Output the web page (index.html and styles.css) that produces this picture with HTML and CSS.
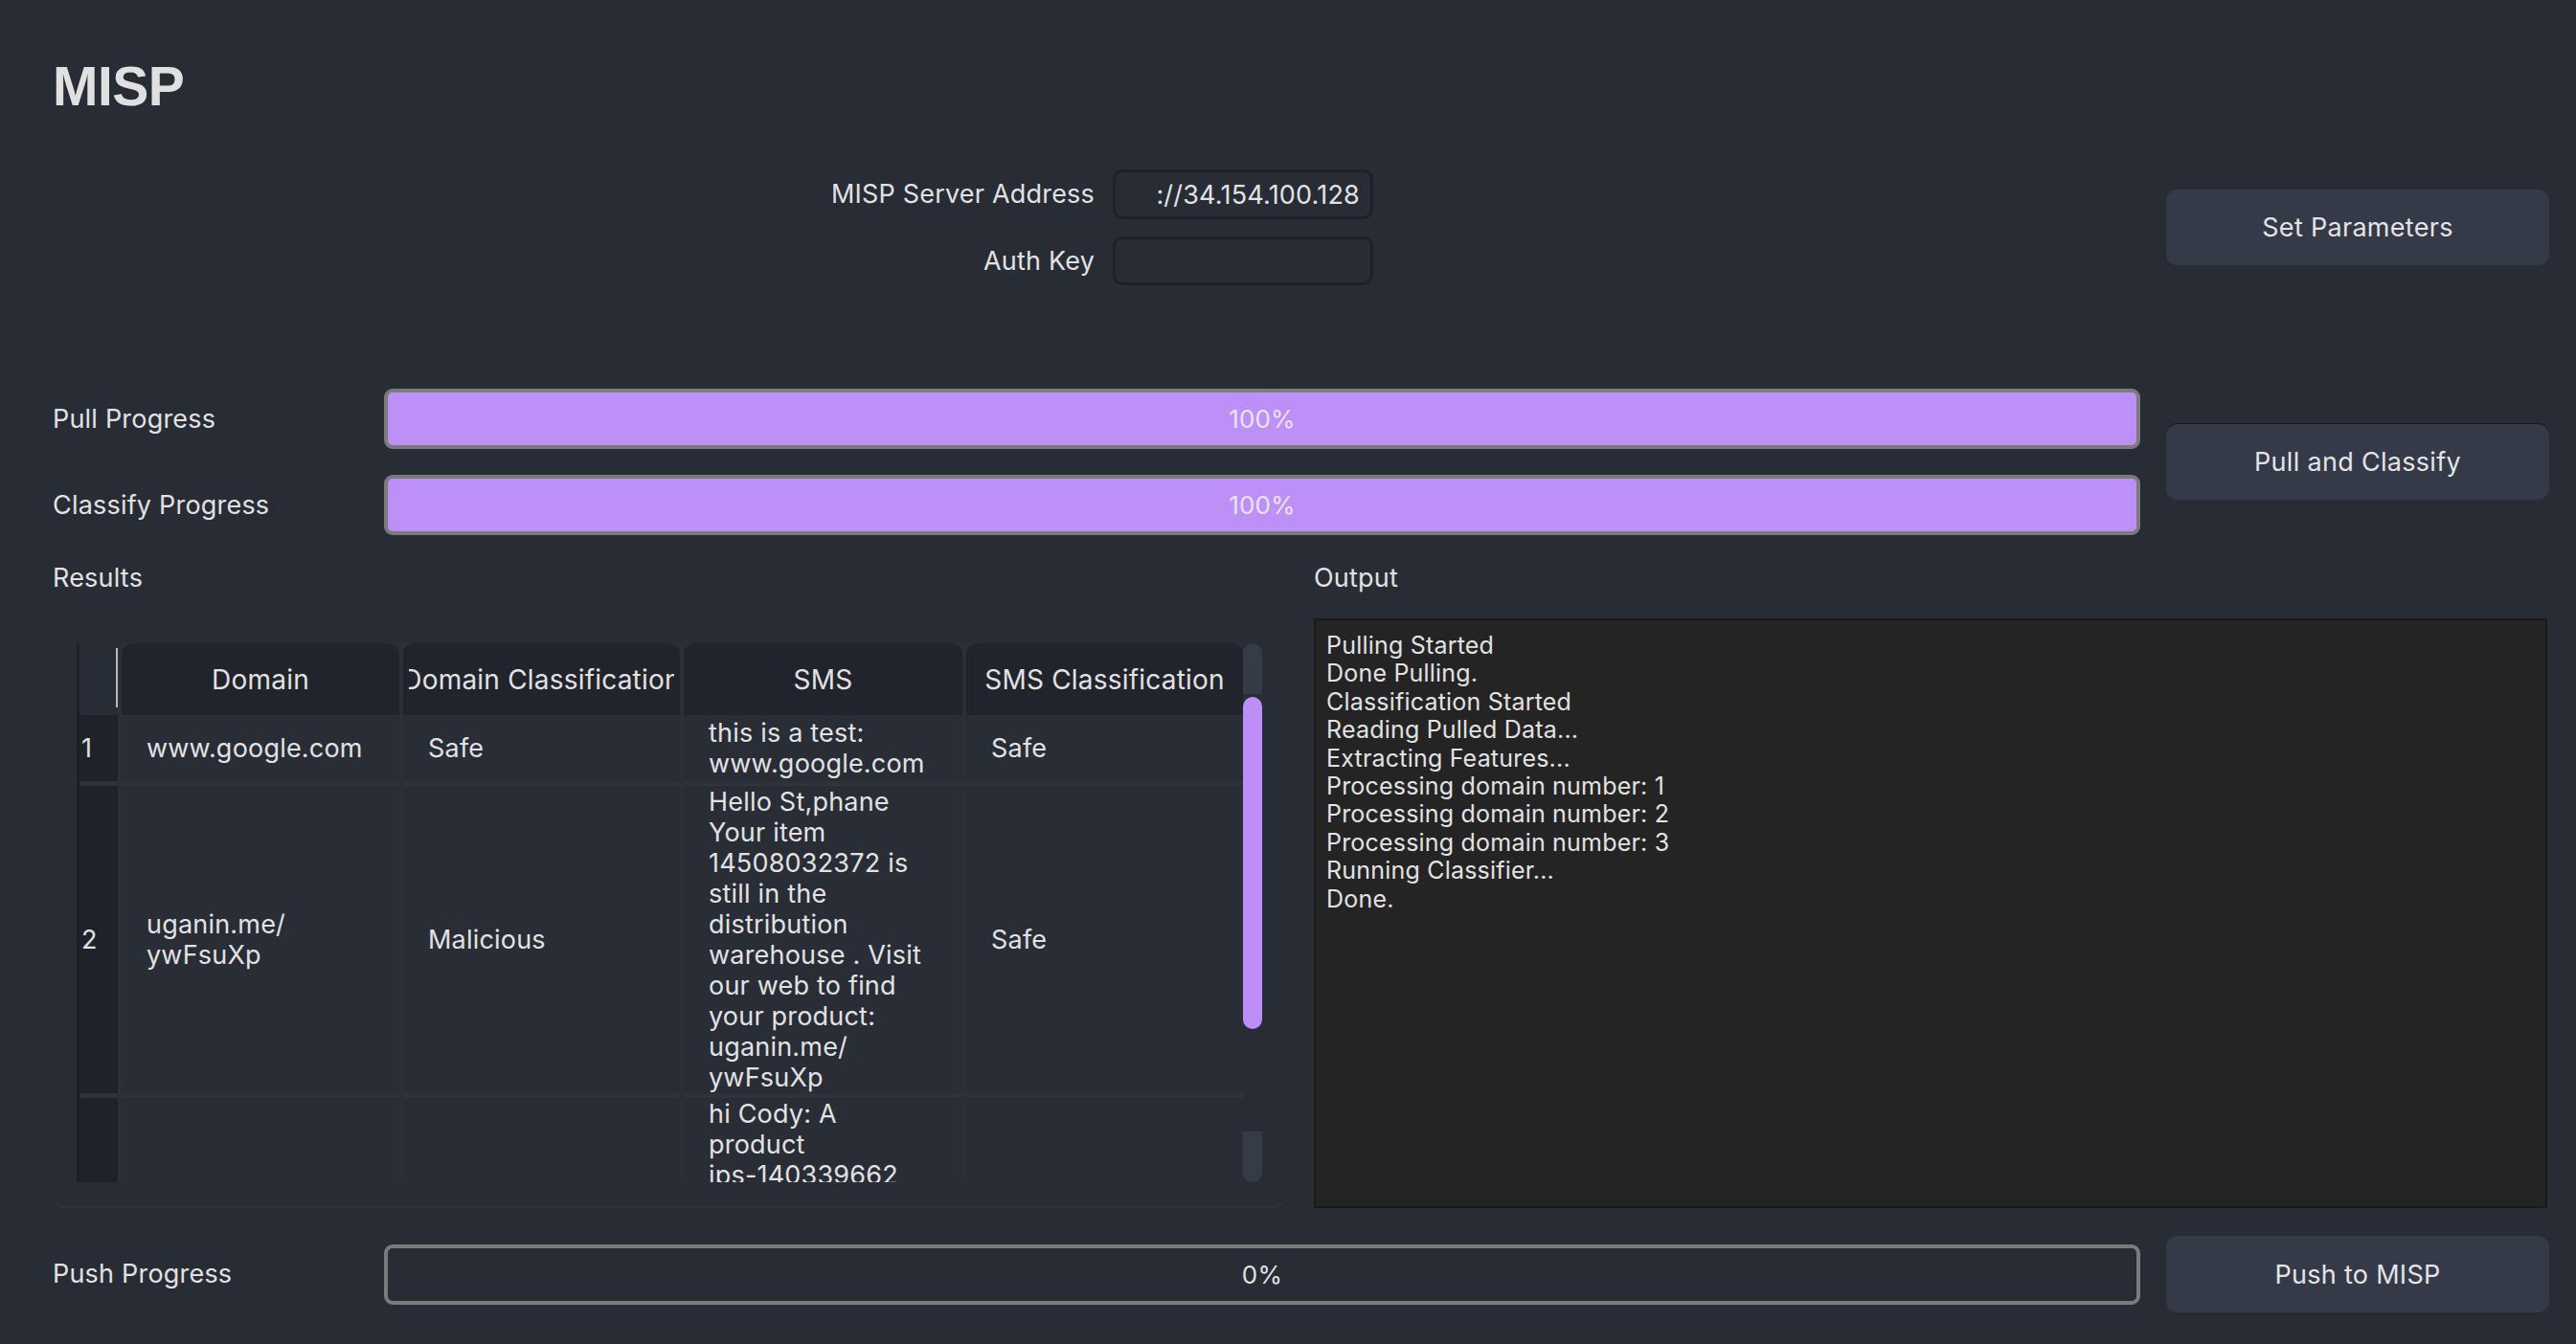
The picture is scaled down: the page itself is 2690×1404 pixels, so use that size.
FILE: index.html
```html
<!DOCTYPE html>
<html lang="en">
<head>
<meta charset="utf-8">
<title>MISP</title>
<link rel="stylesheet" href="styles.css">
</head>
<body>
<div class="app">
  <h1 class="title">MISP</h1>

  <div class="params">
    <div class="form">
      <label class="flabel">MISP Server Address</label>
      <div class="input"><span>://34.154.100.128</span></div>
      <label class="flabel">Auth Key</label>
      <div class="input"></div>
    </div>
    <button class="btn">Set Parameters</button>
  </div>

  <div class="progress">
    <span class="plabel r1">Pull Progress</span>
    <div class="bar full r1">100%</div>
    <span class="plabel r2">Classify Progress</span>
    <div class="bar full r2">100%</div>
    <button class="btn pull">Pull and Classify</button>
  </div>

  <div class="panels">
    <section class="panel">
      <div class="plabel head">Results</div>
      <div class="frame">
        <div class="tablearea">
          <div class="grid">
            <div class="corner"></div>
            <div class="th"><div class="thin"><span>Domain</span></div></div>
            <div class="th"><div class="thin"><span>Domain Classification</span></div></div>
            <div class="th"><div class="thin"><span>SMS</span></div></div>
            <div class="th"><div class="thin"><span>SMS Classification</span></div></div>

            <div class="rh">1</div>
            <div class="td">www.google.com</div>
            <div class="td">Safe</div>
            <div class="td">this is a test:<br>www.google.com</div>
            <div class="td">Safe</div>

            <div class="rh">2</div>
            <div class="td">uganin.me/<br>ywFsuXp</div>
            <div class="td">Malicious</div>
            <div class="td">Hello St,phane<br>Your item<br>14508032372 is<br>still in the<br>distribution<br>warehouse . Visit<br>our web to find<br>your product:<br>uganin.me/<br>ywFsuXp</div>
            <div class="td">Safe</div>

            <div class="rh last"></div>
            <div class="td last"></div>
            <div class="td last"></div>
            <div class="td last top">hi Cody: A<br>product<br>ips-140339662</div>
            <div class="td last"></div>
          </div>
          <div class="scrollbar">
            <div class="sb-cap top"></div>
            <div class="sb-handle"></div>
            <div class="sb-space"></div>
            <div class="sb-cap bottom"></div>
          </div>
        </div>
      </div>
    </section>
    <section class="panel">
      <div class="plabel head">Output</div>
      <div class="output">Pulling Started<br>Done Pulling.<br>Classification Started<br>Reading Pulled Data...<br>Extracting Features...<br>Processing domain number: 1<br>Processing domain number: 2<br>Processing domain number: 3<br>Running Classifier...<br>Done.</div>
    </section>
  </div>

  <div class="progress push">
    <span class="plabel r1">Push Progress</span>
    <div class="bar r1">0%</div>
    <button class="btn pushbtn">Push to MISP</button>
  </div>
</div>
</body>
</html>
```

FILE: styles.css
```css
* { box-sizing: border-box; }
html, body { margin: 0; padding: 0; }
body {
  background: #282c35;
  color: #e2e2e4;
  font-family: Inter, "Liberation Sans", sans-serif;
  font-size: 27px;
  letter-spacing: 0.2px;
}
.app {
  width: 2690px;
  height: 1404px;
  padding: 0 28px 0 55px;
  display: flex;
  flex-direction: column;
  overflow: hidden;
}
.title {
  margin: 0;
  padding-top: 61px;
  font: bold 57px/58px "Liberation Sans", Arial, sans-serif;
  color: #e0e0e0;
  letter-spacing: -0.5px;
}

/* parameters */
.params {
  margin-top: 58px;
  height: 121px;
  display: flex;
  align-items: center;
}
.form {
  display: grid;
  grid-template-columns: 1088px 272px;
  grid-template-rows: 52px 51px;
  column-gap: 19px;
  row-gap: 18px;
}
.flabel {
  align-self: center;
  text-align: right;
  line-height: 32px;
}
.input {
  border: 3px solid #1e2128;
  border-radius: 10px;
  display: flex;
  align-items: center;
  justify-content: flex-end;
  padding: 0 11px;
  overflow: hidden;
  white-space: nowrap;
}
.btn {
  margin-left: auto;
  width: 400px;
  height: 79px;
  border: none;
  border-radius: 12px;
  background: #343a48;
  color: #e4e4e6;
  font-family: Inter, "Liberation Sans", sans-serif;
  font-size: 27px;
  letter-spacing: 0.3px;
  padding: 0;
}

/* progress rows */
.progress {
  margin-top: 108px;
  display: grid;
  grid-template-columns: 346px 1834px 27px 400px;
  grid-template-rows: 63px 63px;
  row-gap: 27px;
}
.plabel { align-self: center; line-height: 32px; }
.r1 { grid-row: 1; }
.r2 { grid-row: 2; }
.plabel.r1, .plabel.r2 { grid-column: 1; }
.bar {
  grid-column: 2;
  border: 4px solid #7b7b7b;
  border-radius: 9px;
  display: flex;
  align-items: center;
  justify-content: center;
  font-size: 26px;
  color: #e2e2e4;
}
.bar.full { background: #bd90f7; color: #ebe2f7; }
.btn.pull {
  grid-column: 4;
  grid-row: 1 / 3;
  align-self: center;
  margin-left: 0;
  box-shadow: 0 -1px 0 #15171c;
}

/* panels */
.panels {
  margin-top: 29px;
  display: grid;
  grid-template-columns: 1288px 1fr;
  column-gap: 29px;
}
.plabel.head { height: 32px; }
.frame {
  margin-top: 26px;
  height: 616px;
  border: 2px solid transparent;
  border-bottom-color: #30343d;
  border-radius: 14px;
  padding: 24px 23px 25px 23px;
}
.tablearea {
  display: flex;
  height: 563px;
}
.grid {
  height: 563px;
  overflow: hidden;
  display: grid;
  grid-template-columns: 40px 290px 289px 291px 289px;
  grid-template-rows: 75px 74px 326px auto;
  column-gap: 4px;
  background: #2b2f37;
  border-left: 3px solid #1c1f24;
}
.corner {
  background: linear-gradient(#b9b9b9, #b9b9b9) right 0 top 5px / 2px 62px no-repeat, #282c35;
}
.th {
  background: #21242b;
  border-radius: 12px 12px 0 0;
  padding: 0 6px;
  display: flex;
  font-size: 28px;
  letter-spacing: 0.2px;
}
.thin {
  flex: 1;
  min-width: 0;
  display: flex;
  align-items: center;
  justify-content: center;
  white-space: nowrap;
  overflow: hidden;
}
.thin span { flex: none; }
.rh {
  background: #1f2228;
  border-bottom: 5px solid #2e323b;
  display: flex;
  align-items: center;
  padding-left: 2px;
}
.td {
  background: #292d36;
  border-bottom: 5px solid #2e323b;
  display: flex;
  align-items: center;
  padding: 0 14px 0 26px;
  line-height: 32px;
}
.td.top { align-items: flex-start; padding-top: 1px; }
.scrollbar {
  width: 20px;
  height: 563px;
  display: flex;
  flex-direction: column;
}
.sb-cap { height: 53px; background: #353b48; }
.sb-cap.top { border-radius: 10px 10px 0 0; }
.sb-cap.bottom { border-radius: 0 0 10px 10px; }
.sb-handle {
  margin-top: 3px;
  height: 347px;
  background: #bd8ef7;
  border-radius: 10px;
}
.sb-space { flex: 1; }
.output {
  margin-top: 26px;
  height: 616px;
  background: #242424;
  border: 2px solid #1a1a1a;
  padding: 12px 11px;
  font-size: 25px;
  line-height: 29.4px;
  letter-spacing: 0.2px;
  color: #e2e2e2;
  margin-right: 2px;
}

/* push */
.progress.push {
  margin-top: 29px;
  grid-template-rows: 80px;
}
.progress.push .bar { height: 63px; align-self: center; }
.btn.pushbtn { grid-column: 4; grid-row: 1; margin-left: 0; height: 80px; }
```
